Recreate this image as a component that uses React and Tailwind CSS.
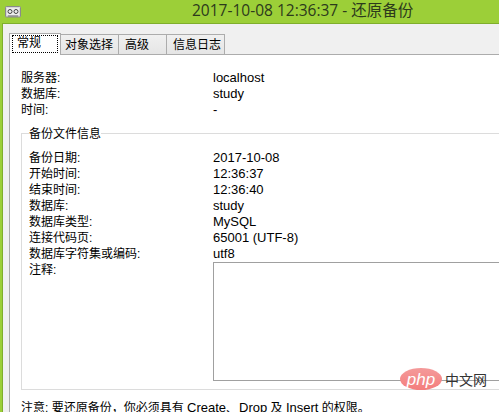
const font = { cjk: 'font-["Tahoma","Liberation_Sans","Noto_Sans_CJK_SC",sans-serif]' };

const serverRows = [
  ['服务器:', 'localhost'],
  ['数据库:', 'study'],
  ['时间:', '-'],
];

const fileRows = [
  ['备份日期:', '2017-10-08'],
  ['开始时间:', '12:36:37'],
  ['结束时间:', '12:36:40'],
  ['数据库:', 'study'],
  ['数据库类型:', 'MySQL'],
  ['连接代码页:', '65001 (UTF-8)'],
  ['数据库字符集或编码:', 'utf8'],
];

function TapeIcon() {
  return (
    <svg width="16" height="12" viewBox="0 0 16 12" className="shrink-0">
      <rect x="0.5" y="0.5" width="15" height="10.5" rx="1" fill="#d8d8d8" stroke="#8a8a8a" />
      <rect x="2" y="2" width="12" height="7" fill="#eeeeee" />
      <circle cx="5" cy="5.5" r="2" fill="none" stroke="#444444" />
      <circle cx="11" cy="5.5" r="2" fill="none" stroke="#444444" />
      <path d="M3 10h10" stroke="#777777" />
    </svg>
  );
}

function Tab({ label, className }) {
  return (
    <div className={`${className} h-[20px] -mr-[1px] flex items-center border border-b-0 border-[#acacac] bg-gradient-to-b from-[#f0f0f0] to-[#e5e5e5] text-[12px] text-black`}>
      {label}
    </div>
  );
}

export default function App() {
  return (
    <div className={`relative w-[499px] h-[412px] overflow-hidden bg-[#9ccf38] ${font.cjk}`}>
      {/* Title bar */}
      <div className="relative h-[23px] flex items-center px-[5px]">
        <TapeIcon />
        <span className="absolute left-[192px] top-0 leading-[20px] text-[15.5px] whitespace-nowrap text-[#2c3a1c] font-['Open_Sans','Noto_Sans_CJK_SC',sans-serif]">
          2017-10-08 12:36:37 - 还原备份
        </span>
      </div>

      {/* Window body */}
      <div className="ml-[2px] h-[389px] border-t border-l border-[#7fae2c] bg-[#f0f0f0] pt-[9px] pl-[6px]">
        {/* Tabs */}
        <div className="flex items-end h-[22px] border-b border-[#acacac]">
          <div className="relative z-10 w-[52px] h-[22px] -mb-[1px] -mr-[1px] border border-b-0 border-[#acacac] bg-white flex justify-center pt-[1px] text-[12px] text-black">
            <div className="w-[46px] h-[18px] border border-dotted border-black flex items-center pl-[4px] pb-[3px]">常规</div>
          </div>
          <Tab label="对象选择" className="w-[59px] pl-[4px]" />
          <Tab label="高级" className="w-[49px] pl-[6px]" />
          <Tab label="信息日志" className="w-[59px] pl-[6px]" />
        </div>

        {/* Panel */}
        <div className="h-[359px] bg-white border-l border-[#acacac] pl-[11px] pt-[15px] text-[12px] leading-[16px] text-black">
          {serverRows.map(([k, v]) => (
            <div key={k} className="flex h-[16px]">
              <div className="w-[192px] shrink-0">{k}</div>
              <div className="whitespace-nowrap text-[13px]">{v}</div>
            </div>
          ))}

          {/* Group box */}
          <div className="relative mt-[15px] h-[257px] w-[500px] border border-r-0 border-[#dcdcdc] pl-[7px] pt-[16px]">
            <div className="absolute left-[7px] -top-[8px] bg-white whitespace-nowrap">备份文件信息</div>
            {fileRows.map(([k, v]) => (
              <div key={k} className="flex h-[16px]">
                <div className="w-[184px] shrink-0">{k}</div>
                <div className="whitespace-nowrap text-[13px]">{v}</div>
              </div>
            ))}
            <div className="flex">
              <div className="w-[184px] shrink-0">注释:</div>
              <div className="w-[300px] h-[119px] border border-r-0 border-[#a0a0a0] bg-white" />
            </div>
          </div>

          <div className="mt-[10px] whitespace-nowrap">
            注意: 要还原备份，你必须具有 <span className="text-[13px]">Create、Drop</span> 及 <span className="text-[13px]">Insert</span> 的权限。
          </div>
        </div>
      </div>

      {/* php watermark */}
      <div className="absolute left-[400px] top-[368px] flex items-center">
        <div className="w-[42px] h-[22px] rounded-[50%] bg-gradient-to-b from-[#f49a9a] to-[#f47d7d] flex items-center justify-center text-white italic text-[17px] leading-none font-['Liberation_Sans',sans-serif]">
          php
        </div>
        <span className="ml-[3px] text-[14px] leading-none text-[#333] font-['Noto_Sans_CJK_SC',sans-serif]">中文网</span>
      </div>
    </div>
  );
}
